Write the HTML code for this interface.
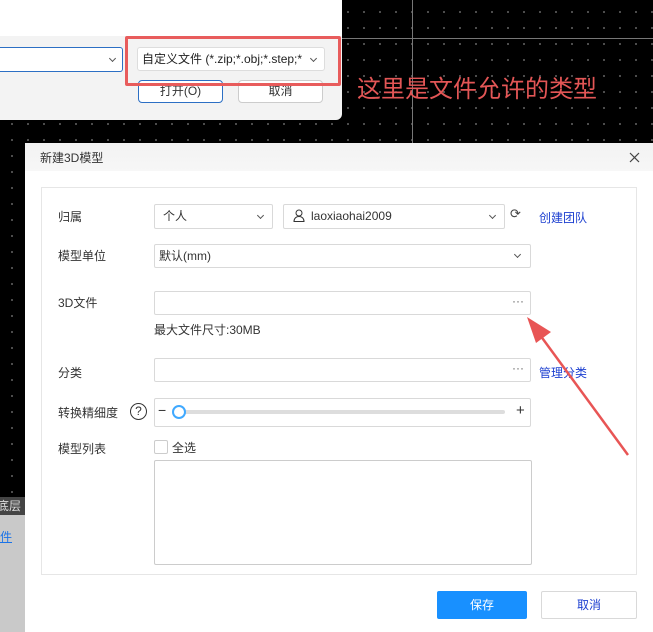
<!DOCTYPE html>
<html><head><meta charset="utf-8"><style>
*{box-sizing:border-box;margin:0;padding:0}
body{width:653px;height:632px;overflow:hidden;position:relative;background:#000;font-family:"Liberation Sans","Noto Sans CJK SC",sans-serif;font-size:12px;color:#333}
.dots{position:absolute;inset:0;background-image:radial-gradient(#666 0.8px,transparent 1px);background-size:16px 16px;background-position:4px 4px}
.a{position:absolute}
.box{position:absolute;border:1px solid #d9d9d9;background:#fff;border-radius:2px}
.chev{position:absolute;width:5px;height:5px;border-right:1px solid #555;border-bottom:1px solid #555;transform:rotate(45deg)}
.lbl{position:absolute;left:58px;font-size:12px;color:#333}
.link{position:absolute;color:#1c3fd0;font-size:12px}
</style></head><body>
<div class="dots"></div>
<div class="a" style="left:412px;top:0;width:1px;height:143px;background:#777"></div>
<div class="a" style="left:342px;top:38px;width:311px;height:1px;background:#777"></div>
<div class="a" style="left:0;top:0;width:342px;height:120px;background:#f3f3f3;border-bottom-right-radius:6px"></div>
<div class="a" style="left:0;top:0;width:342px;height:36px;background:#fff"></div>
<div class="a" style="left:0;top:47px;height:25px;border:1px solid #2c6fc4;border-left:none;background:#fff;width:123px;border-radius:0 3px 3px 0"></div>
<div class="chev" style="left:110px;top:56px"></div>
<div class="a" style="left:137px;top:47px;width:188px;height:24px;border:1px solid #ddd;background:#fff;border-radius:3px;font-size:12px;line-height:22px;padding-left:4px;color:#222;white-space:nowrap;overflow:hidden">自定义文件 (*.zip;*.obj;*.step;*</div>
<div class="chev" style="left:311px;top:56px"></div>
<div class="a" style="left:138px;top:80px;width:85px;height:23px;border:1px solid #2c6fc4;background:#fff;border-radius:4px;text-align:center;line-height:21px">打开(O)</div>
<div class="a" style="left:238px;top:80px;width:85px;height:23px;border:1px solid #ccc;background:#fff;border-radius:4px;text-align:center;line-height:21px">取消</div>
<div class="a" style="left:125px;top:36px;width:216px;height:50px;border:3px solid #e85c5c;border-radius:2px"></div>
<div class="a" style="left:357px;top:69px;font-size:24px;color:#e35656;white-space:nowrap">这里是文件允许的类型</div>
<div class="a" style="left:0;top:497px;width:25px;height:135px;background:#c9c9c9"></div>
<div class="a" style="left:0;top:497px;width:25px;height:18px;background:#444;color:#ddd;font-size:12px;line-height:18px;white-space:nowrap;overflow:hidden"><span style="margin-left:-3px">底层</span></div>
<div class="a" style="left:0;top:528px;color:#1a73e8;font-size:12px;text-decoration:underline">件</div>
<div class="a" style="left:25px;top:143px;width:628px;height:489px;background:#fff"></div>
<div class="a" style="left:25px;top:143px;width:628px;height:28px;background:linear-gradient(#f2f2f2,#f7f7f7);"></div>
<div class="a" style="left:40px;top:149px;font-size:12px;color:#333">新建3D模型</div>
<svg class="a" style="left:629px;top:152px" width="11" height="11"><path d="M1 1L10 10M10 1L1 10" stroke="#444" stroke-width="1.2"/></svg>
<div class="a" style="left:41px;top:187px;width:596px;height:388px;border:1px solid #e6e6e6"></div>
<div class="lbl" style="top:208px">归属</div>
<div class="box" style="left:154px;top:204px;width:119px;height:25px;line-height:23px;padding-left:8px">个人</div>
<div class="chev" style="left:258px;top:213px"></div>
<div class="box" style="left:283px;top:204px;width:222px;height:25px;line-height:23px;padding-left:27px">laoxiaohai2009</div>
<svg class="a" style="left:293px;top:209px" width="12" height="13" viewBox="0 0 12 13"><circle cx="6" cy="4" r="3" fill="none" stroke="#333"/><path d="M1 12.5c0-3 2-5 5-5s5 2 5 5z" fill="none" stroke="#333"/></svg>
<div class="chev" style="left:490px;top:213px"></div>
<div class="a" style="left:510px;top:206px;font-size:13px;color:#444">⟳</div>
<div class="link" style="left:539px;top:209px">创建团队</div>
<div class="lbl" style="top:247px">模型单位</div>
<div class="box" style="left:154px;top:244px;width:377px;height:24px;line-height:22px;padding-left:4px">默认(mm)</div>
<div class="chev" style="left:515px;top:252px"></div>
<div class="lbl" style="top:294px">3D文件</div>
<div class="box" style="left:154px;top:291px;width:377px;height:24px"></div>
<div class="a" style="left:512px;top:294px;color:#666">···</div>
<div class="a" style="left:154px;top:321px">最大文件尺寸:30MB</div>
<div class="lbl" style="top:364px">分类</div>
<div class="box" style="left:154px;top:358px;width:377px;height:24px"></div>
<div class="a" style="left:512px;top:361px;color:#666">···</div>
<div class="link" style="left:539px;top:364px">管理分类</div>
<div class="lbl" style="top:404px">转换精细度</div>
<div class="a" style="left:130px;top:403px;width:17px;height:17px;border:1.3px solid #333;border-radius:50%;text-align:center;line-height:15px;font-size:12px">?</div>
<div class="box" style="left:154px;top:398px;width:377px;height:29px"></div>
<div class="a" style="left:158px;top:402px;font-size:14px">−</div>
<div class="a" style="left:174px;top:410px;width:331px;height:4px;background:#ddd;border-radius:2px"></div>
<div class="a" style="left:172px;top:405px;width:14px;height:14px;border:2px solid #40a9ff;border-radius:50%;background:#fff"></div>
<div class="a" style="left:516px;top:402px;font-size:15px">+</div>
<div class="lbl" style="top:440px">模型列表</div>
<div class="a" style="left:154px;top:440px;width:14px;height:14px;border:1px solid #ccc;border-radius:2px"></div>
<div class="a" style="left:172px;top:439px">全选</div>
<div class="box" style="left:154px;top:460px;width:378px;height:105px;border-color:#ccc"></div>
<div class="a" style="left:437px;top:591px;width:90px;height:28px;background:#1890ff;border-radius:2px;color:#fff;text-align:center;line-height:28px">保存</div>
<div class="a" style="left:541px;top:591px;width:96px;height:28px;border:1px solid #d9d9d9;border-radius:2px;color:#1c3fd0;text-align:center;line-height:26px">取消</div>
<svg class="a" style="left:0;top:0" width="653" height="632"><line x1="628" y1="455" x2="540" y2="335" stroke="#e85555" stroke-width="2.5"/><polygon points="527,317 551,332 536,343" fill="#e85555"/></svg>
</body></html>
